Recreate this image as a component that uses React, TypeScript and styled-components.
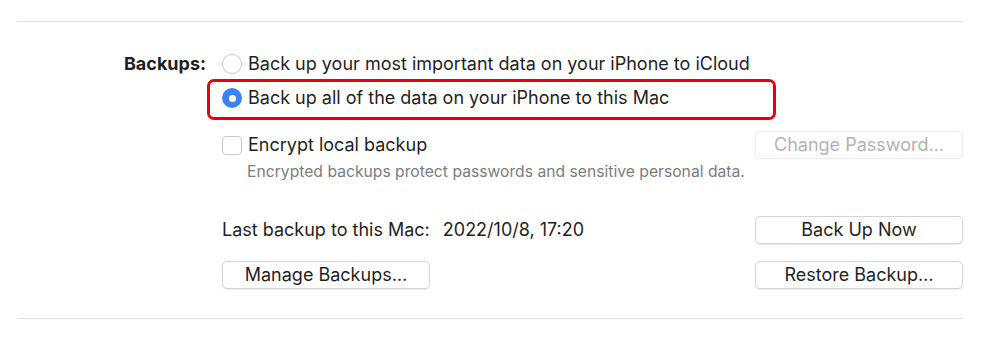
import React, { FC } from "react";
import styled, { createGlobalStyle } from "styled-components";

const GlobalStyle = createGlobalStyle`
    html, body {
        margin: 0;
        padding: 0;
        background: #ffffff;
    }

    body {
        font-family: Inter, "Noto Sans", "Liberation Sans", sans-serif;
        color: #1f1f1f;
        -webkit-font-smoothing: antialiased;
    }
`;

const Page = styled.div`
    width: 1000px;
    height: 342px;
    box-sizing: border-box;
    padding: 21px 37px 0 17px;
    overflow: hidden;
`;

const Divider = styled.div<{ $top?: number }>`
    height: 1px;
    margin-top: ${p => p.$top ?? 0}px;
    background: #e0e0e0;
`;

const Section = styled.section`
    display: flex;
    padding-top: 30px;
`;

const Label = styled.div`
    width: 189px;
    margin-right: 16px;
    text-align: right;
    font-size: 18px;
    font-weight: 700;
    line-height: 24px;
    color: #1f1f1f;
`;

const Content = styled.div`
    flex: 1;
    display: flex;
    flex-direction: column;
`;

const Row = styled.div<{ $top: number; $height?: number }>`
    position: relative;
    display: flex;
    align-items: center;
    justify-content: space-between;
    margin-top: ${p => p.$top}px;
    height: ${p => p.$height ?? 24}px;
`;

const Option = styled.label`
    display: flex;
    align-items: center;
    font-size: 18px;
    line-height: 24px;
`;

const Radio = styled.span<{ $checked?: boolean }>`
    width: 20px;
    height: 20px;
    box-sizing: border-box;
    border-radius: 50%;
    margin-right: 6px;
    display: flex;
    align-items: center;
    justify-content: center;
    border: ${p => (p.$checked ? "none" : "1px solid #c9c9c9")};
    background: ${p => (p.$checked ? "#3b83f4" : "#ffffff")};

    &::after {
        content: "";
        display: ${p => (p.$checked ? "block" : "none")};
        width: 7px;
        height: 7px;
        border-radius: 50%;
        background: #ffffff;
    }
`;

const Checkbox = styled.span`
    width: 20px;
    height: 19px;
    box-sizing: border-box;
    border: 1px solid #c9c9c9;
    border-radius: 4px;
    margin-right: 6px;
    background: #ffffff;
`;

// red annotation frame drawn over the selected option
const Highlight = styled.div`
    position: absolute;
    left: -15px;
    right: 187px;
    top: -7px;
    bottom: -10px;
    border: 3px solid #e8000c;
    border-radius: 7px;
    pointer-events: none;
`;

const Note = styled.div`
    margin-top: 4px;
    padding-left: 25px;
    height: 18px;
    line-height: 18px;
    font-size: 15.7px;
    color: #7d7d7d;
`;

const Info = styled.div`
    display: flex;
    gap: 13px;
    font-size: 18px;
    line-height: 24px;
`;

const Button = styled.button<{ $disabled?: boolean }>`
    width: 208px;
    height: 28px;
    box-sizing: border-box;
    padding: 0;
    border-radius: 5px;
    border: 1px solid ${p => (p.$disabled ? "#ebebeb" : "#d4d4d4")};
    box-shadow: ${p =>
        p.$disabled ? "none" : "0 1px 1px rgba(0, 0, 0, 0.08)"};
    background: #ffffff;
    font-family: inherit;
    font-size: 18px;
    line-height: 26px;
    color: ${p => (p.$disabled ? "#b3b3b3" : "#1f1f1f")};
`;

const App: FC = () => (
    <>
        <GlobalStyle />
        <Page>
            <Divider />
            <Section>
                <Label>Backups:</Label>
                <Content>
                    <Row $top={0}>
                        <Option>
                            <Radio />
                            Back up your most important data on your iPhone to iCloud
                        </Option>
                    </Row>
                    <Row $top={10}>
                        <Option>
                            <Radio $checked />
                            Back up all of the data on your iPhone to this Mac
                        </Option>
                        <Highlight />
                    </Row>
                    <Row $top={21} $height={28}>
                        <Option>
                            <Checkbox />
                            Encrypt local backup
                        </Option>
                        <Button $disabled>Change Password…</Button>
                    </Row>
                    <Note>
                        Encrypted backups protect passwords and sensitive personal data.
                    </Note>
                    <Row $top={35} $height={28}>
                        <Info>
                            <span>Last backup to this Mac:</span>
                            <span>2022/10/8, 17:20</span>
                        </Info>
                        <Button>Back Up Now</Button>
                    </Row>
                    <Row $top={17} $height={28}>
                        <Button>Manage Backups…</Button>
                        <Button>Restore Backup…</Button>
                    </Row>
                </Content>
            </Section>
            <Divider $top={29} />
        </Page>
    </>
);

export default App;
